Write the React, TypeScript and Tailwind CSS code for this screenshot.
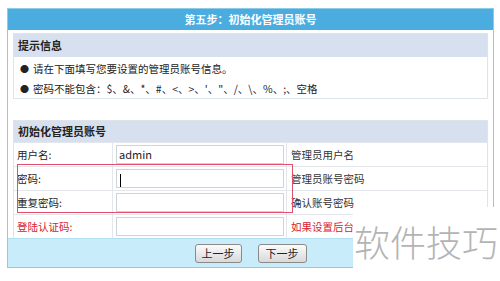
import React from "react";

const font = { fontFamily: '"Noto Sans CJK SC", "Noto Sans", sans-serif' };

const rows = [
  { label: "用户名:", value: "admin", hint: "管理员用户名", red: false },
  { label: "密码:", value: "", hint: "管理员账号密码", red: false, caret: true },
  { label: "重复密码:", value: "", hint: "确认账号密码", red: false },
  { label: "登陆认证码:", value: "", hint: "如果设置后台", red: true },
];

export default function App() {
  return (
    <div className="relative w-[500px] h-[281px] bg-white overflow-hidden text-[10.5px] text-[#222]" style={font}>
      <div className="ml-[7px] mt-[8px] w-[487px] border border-[#8ccbe9] bg-white">
        {/* title bar */}
        <div className="h-[21px] bg-[#4aacdf] text-white font-bold text-[11px] text-center leading-[21px]">
          第五步：初始化管理员账号
        </div>

        <div className="px-[5px]">
          {/* tips */}
          <div className="mt-[3px] border border-[#dfe4ea]">
            <div className="h-[23px] bg-[#d7e0ee] font-bold text-[11px] leading-[23px] pl-[4px]">提示信息</div>
            <div className="h-[41px] pt-[2px]">
              <div className="flex items-center leading-[20px] pl-[6px]">
                <span className="text-[9px] w-[13px]">●</span>
                <span>请在下面填写您要设置的管理员账号信息。</span>
              </div>
              <div className="flex items-center leading-[20px] pl-[6px]">
                <span className="text-[9px] w-[13px]">●</span>
                <span>密码不能包含：$、&amp;、*、#、&lt;、&gt;、'、"、/、\、%、;、空格</span>
              </div>
            </div>
          </div>

          {/* account form */}
          <div className="mt-[21px] border border-[#dfe4ea] border-b-0">
            <div className="h-[21px] bg-[#d7e0ee] font-bold text-[11px] leading-[21px] pl-[4px]">初始化管理员账号</div>
            {rows.map((r) => (
              <div key={r.label} className="flex h-[24px] border-t border-[#e3e6ea]">
                <div className={`w-[99px] pl-[3px] leading-[23px] border-r border-[#e3e6ea] ${r.red ? "text-[#d9232e]" : ""}`}>
                  {r.label}
                </div>
                <div className="w-[174px] flex items-center pl-[3px] border-r border-[#e3e6ea]">
                  <div className="w-[168px] h-[19px] border border-[#cfd4da] bg-white leading-[17px] pl-[2px] text-[11px]">
                    {r.value}
                    {r.caret && <span className="inline-block w-px h-[13px] bg-black align-middle ml-[1px]" />}
                  </div>
                </div>
                <div className={`pl-[4px] leading-[23px] ${r.red ? "text-[#d9232e]" : "text-[#333]"}`}>{r.hint}</div>
              </div>
            ))}
          </div>
        </div>

        {/* buttons bar */}
        <div className="h-[29px] bg-[#c9ecfa] border-t border-[#b3dff2] flex items-center justify-center gap-[16px]">
          <button className="w-[47px] h-[19px] rounded-[3px] border border-[#8a8a8a] bg-gradient-to-b from-[#fbfbfb] to-[#d9d9d9] text-[11px] leading-[17px]">
            上一步
          </button>
          <button className="w-[49px] h-[19px] rounded-[3px] border border-[#8a8a8a] bg-gradient-to-b from-[#fbfbfb] to-[#d9d9d9] text-[11px] leading-[17px]">
            下一步
          </button>
        </div>
      </div>

      {/* red highlight box */}
      <div className="absolute left-[17px] top-[164px] w-[276px] h-[49px] border border-[#e0506a]" />

      {/* watermark */}
      <div className="absolute left-[353px] top-[207px] w-[147px] h-[74px] bg-white">
        <div className="mt-[14px] ml-[1px] whitespace-nowrap text-[36px] leading-[40px] font-light text-[#b4b4b4]">软件技巧</div>
      </div>
    </div>
  );
}
